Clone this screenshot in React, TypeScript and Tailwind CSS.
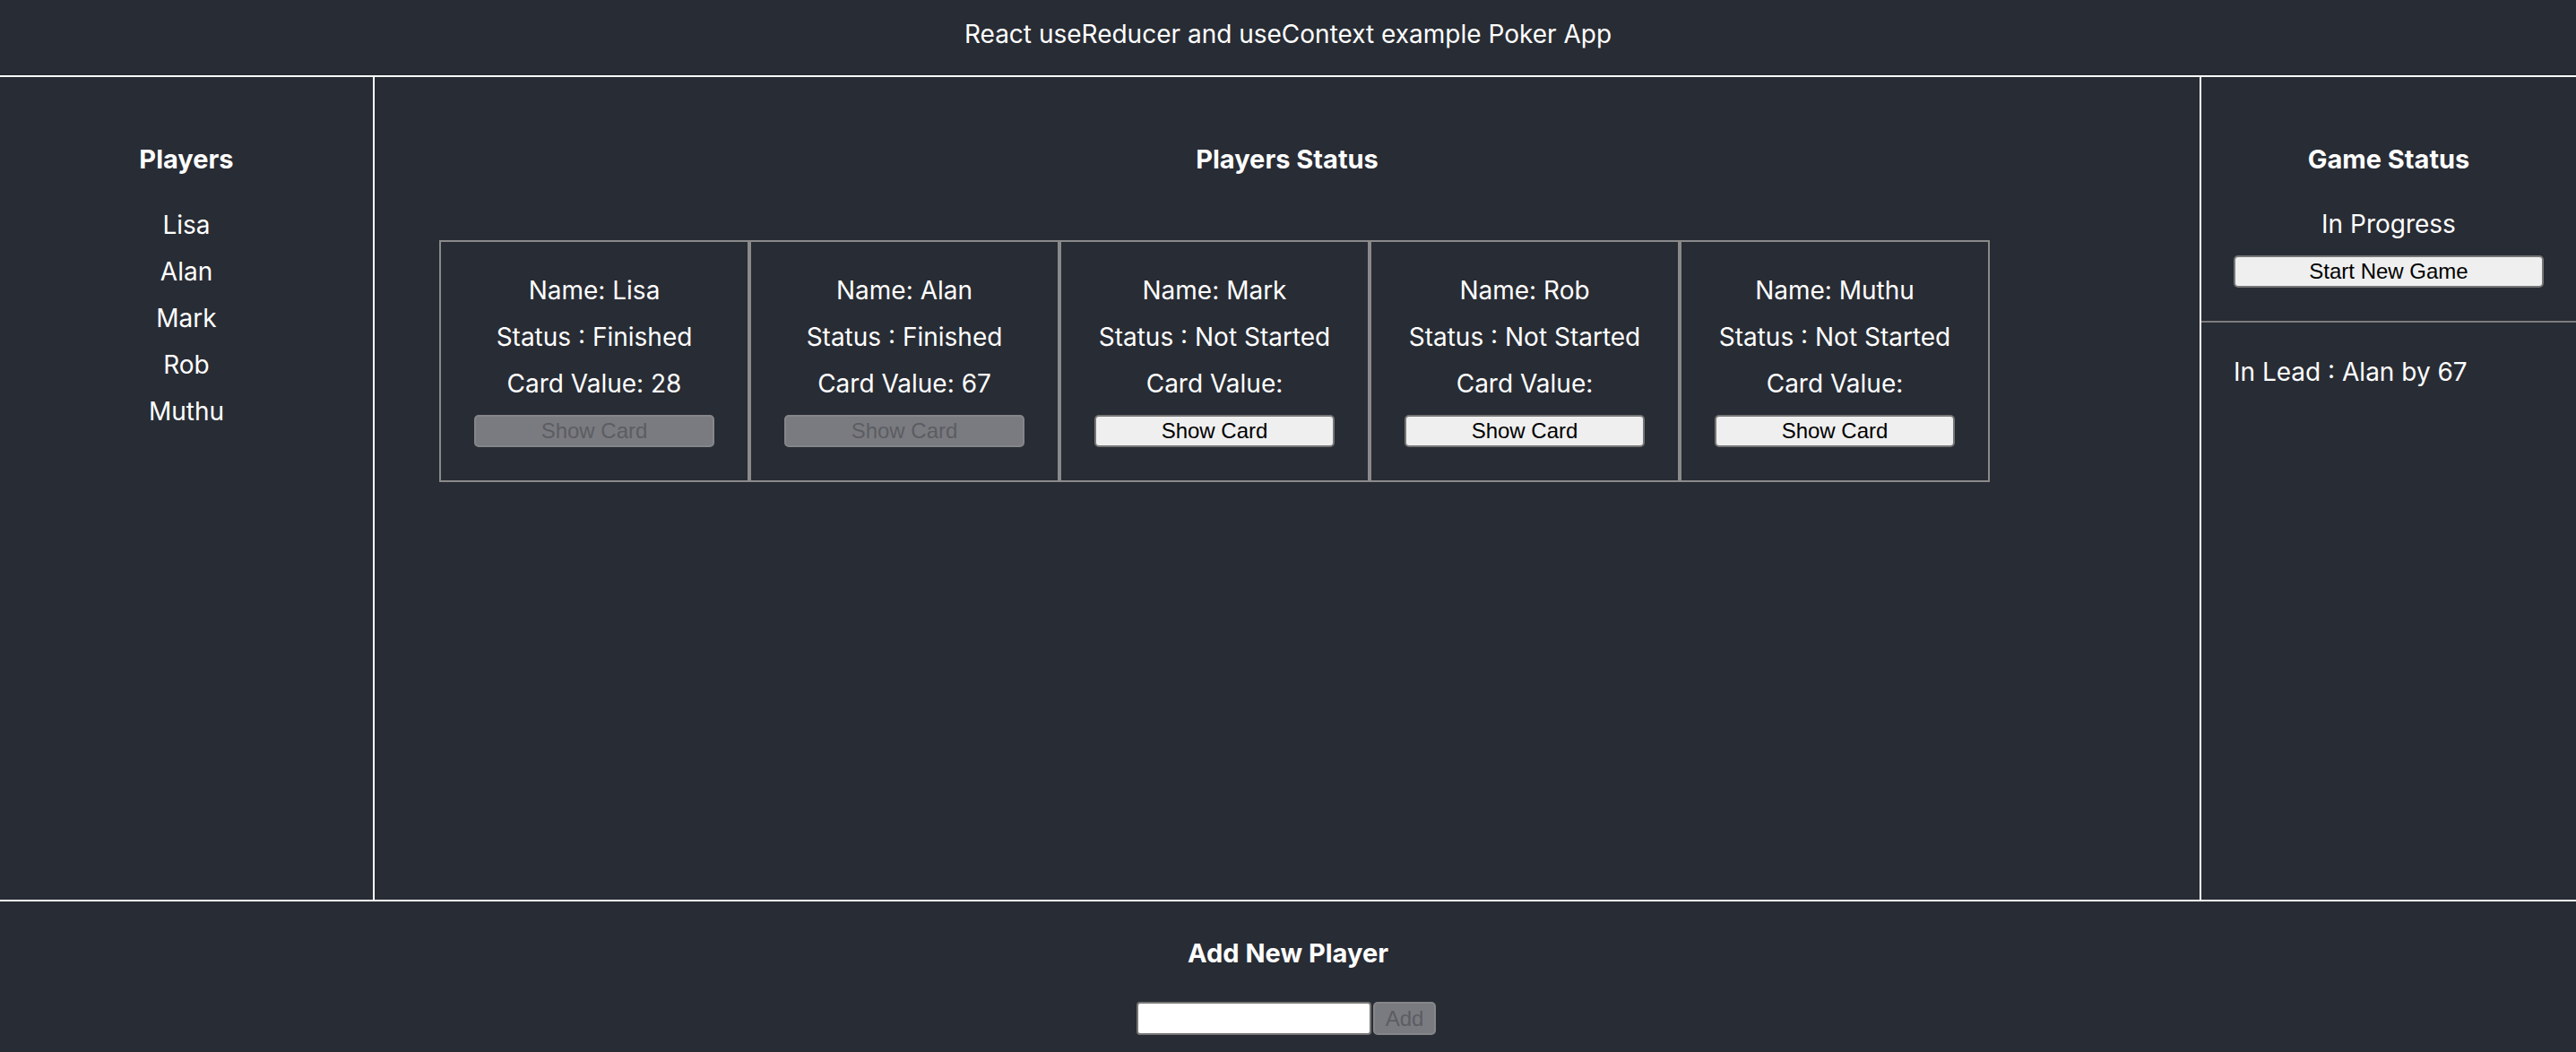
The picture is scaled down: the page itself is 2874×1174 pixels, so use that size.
const players = [
  { name: "Lisa", status: "Finished", value: "28", done: true },
  { name: "Alan", status: "Finished", value: "67", done: true },
  { name: "Mark", status: "Not Started", value: "", done: false },
  { name: "Rob", status: "Not Started", value: "", done: false },
  { name: "Muthu", status: "Not Started", value: "", done: false },
];

const btn =
  "h-[36px] rounded-[5px] border-2 font-['Liberation_Sans',Arial,sans-serif] text-[24px] leading-none";
const btnOn = "border-[#767676] bg-[#efefef] text-black";
const btnOff = "border-[#85868a] bg-[#7a7b80] text-[#5c5d62]";

const PlayerCard = ({ p }: { p: (typeof players)[number] }) => (
  <div className="flex w-[346px] flex-col items-center border-2 border-[#8a8a8a] pt-[28px] pb-[37px] leading-[52px]">
    <p>Name: {p.name}</p>
    <p>Status : {p.status}</p>
    <p>Card Value: {p.value}</p>
    <button disabled={p.done} className={`${btn} ${p.done ? btnOff : btnOn} mt-[9px] w-[268px]`}>
      Show Card
    </button>
  </div>
);

export default function App() {
  return (
    <div className="flex min-h-screen flex-col bg-[#282c34] font-['Inter',sans-serif] text-[28px] text-white">
      <header className="h-[86px] border-b-2 border-white pt-[21px] text-center leading-[34px]">
        React useReducer and useContext example Poker App
      </header>

      <main className="flex h-[920px] border-b-2 border-white">
        <aside className="w-[418px] shrink-0 border-r-2 border-white pt-[75px] text-center">
          <h3 className="text-[29px] font-bold leading-[34px]">Players</h3>
          <ul className="mt-[30px] leading-[52px]">
            {players.map((p) => (
              <li key={p.name}>{p.name}</li>
            ))}
          </ul>
        </aside>

        <section className="flex-1 pt-[75px]">
          <h3 className="text-center text-[29px] font-bold leading-[34px]">Players Status</h3>
          <div className="mt-[73px] flex pl-[72px]">
            {players.map((p) => (
              <PlayerCard key={p.name} p={p} />
            ))}
          </div>
        </section>

        <aside className="w-[420px] shrink-0 border-l-2 border-white">
          <div className="flex flex-col items-center border-b-2 border-[#7c7c7c] px-[36px] pt-[75px] pb-[37px]">
            <h3 className="text-[29px] font-bold leading-[34px]">Game Status</h3>
            <p className="mt-[29px] leading-[52px]">In Progress</p>
            <button className={`${btn} ${btnOn} mt-[9px] w-full`}>Start New Game</button>
          </div>
          <p className="px-[36px] pt-[29px] leading-[52px]">In Lead : Alan by 67</p>
        </aside>
      </main>

      <footer className="flex flex-col items-center pt-[41px] pb-[40px]">
        <h3 className="text-[29px] font-bold leading-[34px]">Add New Player</h3>
        <div className="mt-[37px] flex gap-[2px] pr-[4px]">
          <input
            type="text"
            className="h-[37px] w-[262px] rounded-[4px] border-2 border-[#767676] bg-white px-2 text-[20px] text-black outline-none"
          />
          <button disabled className={`${btn} ${btnOff} h-[37px] w-[70px]`}>
            Add
          </button>
        </div>
      </footer>
    </div>
  );
}
